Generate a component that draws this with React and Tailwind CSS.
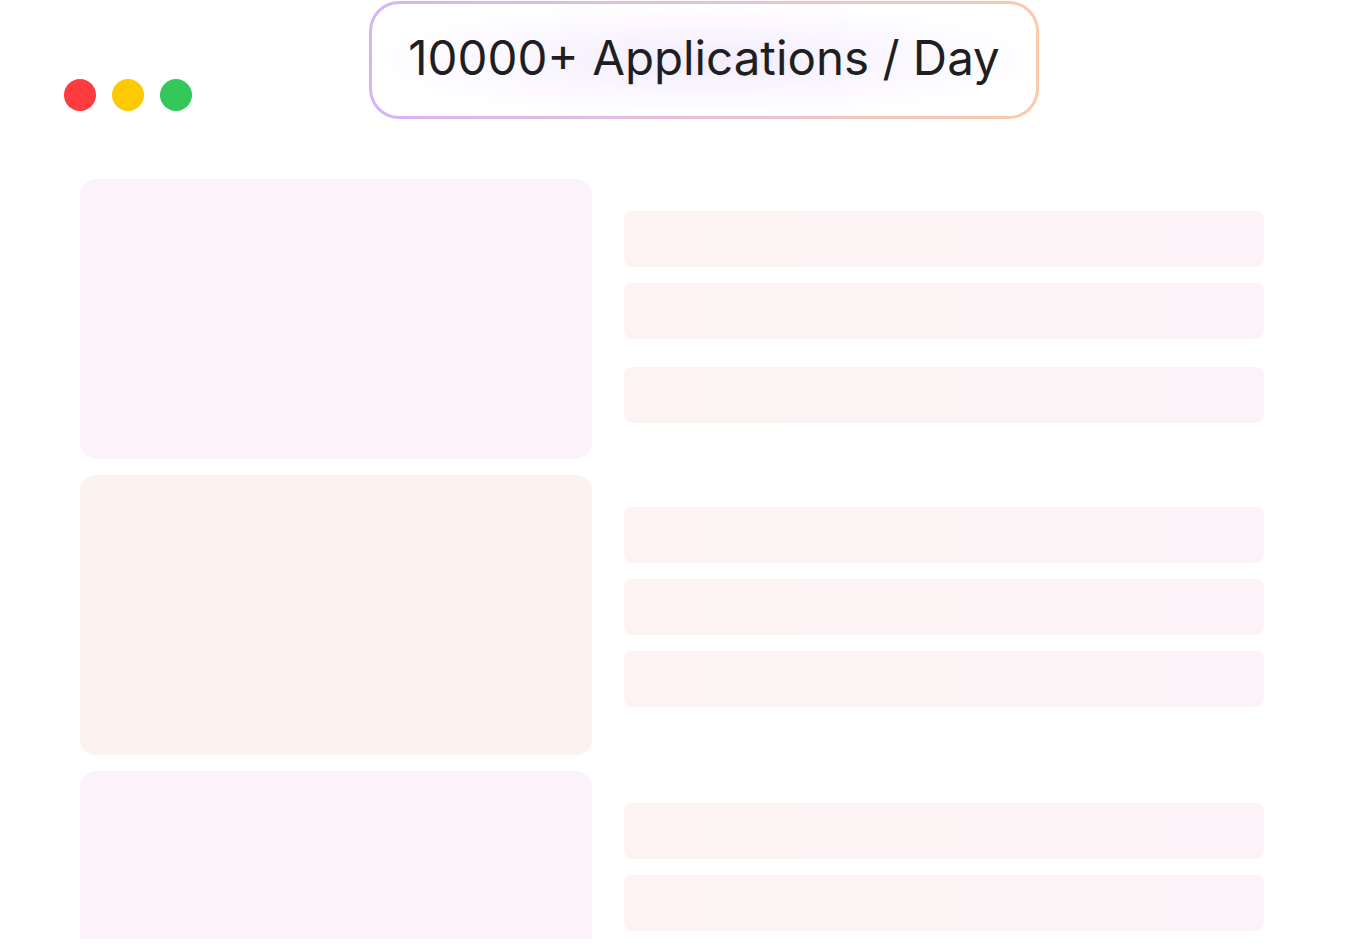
import React from 'react';

const rows = [
  { card: 'bg-[#fcf2f9]', bars: 3, split: true },
  { card: 'bg-[#fcf3f1]', bars: 3, split: false },
  { card: 'bg-[#fcf2f9]', bars: 2, split: false },
];

function Bar({ extra = '' }) {
  return <div className={`h-14 w-full rounded-lg bg-linear-to-r from-[#fcf3f2] to-[#fcf3f9] ${extra}`} />;
}

export default function App() {
  return (
    <div className="h-[951px] w-[1364px] bg-white overflow-hidden" style={{ fontFamily: 'Inter, "Noto Sans", sans-serif' }}>
      <div className="h-[939px] overflow-hidden">
        {/* header: window dots + badge */}
        <div className="flex items-start">
          <div className="ml-16 mt-[79px] flex gap-4">
            <span className="h-8 w-8 rounded-full bg-[#fe3b3f]" />
            <span className="h-8 w-8 rounded-full bg-[#ffc900]" />
            <span className="h-8 w-8 rounded-full bg-[#34c759]" />
          </div>
          <div className="ml-[177px] mt-px rounded-[30px] bg-linear-to-r from-[#d5b3fb] to-[#fdcaa9] p-[3px]">
            <div className="flex h-[112px] w-[664px] items-center justify-center rounded-[27px] bg-[radial-gradient(ellipse_at_center,#f3ecfe_0%,#fbf8ff_45%,#ffffff_75%)]">
              <span className="-mt-1 text-[47.5px] leading-none text-[#1f1f22]">10000+ Applications / Day</span>
            </div>
          </div>
        </div>

        {/* content rows */}
        <div className="mt-[60px] flex flex-col gap-4 pl-20">
          {rows.map((r, i) => (
            <div key={i} className="flex gap-8">
              <div className={`h-[280px] w-[512px] shrink-0 rounded-2xl ${r.card}`} />
              <div className="flex w-[640px] flex-col gap-4 pt-8">
                {Array.from({ length: r.bars }).map((_, j) => (
                  <Bar key={j} extra={r.split && j === 2 ? 'mt-3' : ''} />
                ))}
              </div>
            </div>
          ))}
        </div>
      </div>
    </div>
  );
}
